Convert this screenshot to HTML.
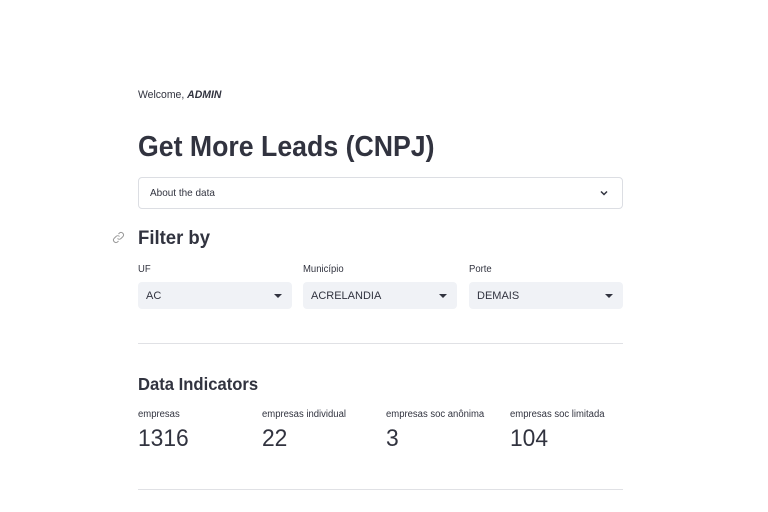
<html><head><style>
body{margin:0;background:#fff;font-family:"Liberation Sans",sans-serif;color:#31333f;width:768px;height:512px;overflow:hidden;position:relative}
.a{position:absolute;white-space:nowrap}
.n{transform:scaleX(0.95);transform-origin:left}
.sel{position:absolute;top:282px;height:27px;background:#f0f2f6;border-radius:4px;font-size:11px;line-height:28px;padding-left:8px;box-sizing:border-box}
.sel:after{content:"";position:absolute;right:10px;top:12px;border-left:4px solid transparent;border-right:4px solid transparent;border-top:4px solid #31333f}
.lab{position:absolute;top:264px;font-size:10px}
.ml{position:absolute;top:409px;font-size:10px}
.mv{position:absolute;top:425px;font-size:24px;line-height:28px}
</style></head><body>
<div class="a n" style="left:138px;top:89px;font-size:11px">Welcome, <b><i>ADMIN</i></b></div>
<div class="a" style="left:138px;top:129px;font-size:29px;font-weight:bold;line-height:36px;transform:scaleX(0.92);transform-origin:left">Get More Leads (CNPJ)</div>
<div class="a" style="left:138px;top:177px;width:485px;height:32px;border:1px solid #dcdee3;border-radius:4px;box-sizing:border-box"><span class="n" style="position:absolute;left:11px;top:9px;font-size:10.5px">About the data</span>
<svg style="position:absolute;right:13px;top:10px" width="10" height="10" viewBox="0 0 10 10"><path d="M2 3.5L5 6.5L8 3.5" stroke="#31333f" stroke-width="1.5" fill="none"/></svg></div>
<svg class="a" style="left:112px;top:231px" width="13" height="13" viewBox="0 0 13 13" fill="none" stroke="#999" stroke-width="1"><path d="M5.5 7.5a2.5 2.5 0 0 0 3.5 0l2-2a2.5 2.5 0 0 0-3.5-3.5l-1 1"/><path d="M7.5 5.5a2.5 2.5 0 0 0-3.5 0l-2 2a2.5 2.5 0 0 0 3.5 3.5l1-1"/></svg>
<div class="a n" style="left:138px;top:226px;font-size:19.5px;font-weight:bold;line-height:24px">Filter by</div>
<div class="lab n" style="left:138px">UF</div>
<div class="lab n" style="left:303px">Município</div>
<div class="lab n" style="left:469px">Porte</div>
<div class="sel" style="left:138px;width:154px">AC</div>
<div class="sel" style="left:303px;width:154px">ACRELANDIA</div>
<div class="sel" style="left:469px;width:154px">DEMAIS</div>
<div class="a" style="left:138px;top:343px;width:485px;height:1px;background:#e0e1e5"></div>
<div class="a n" style="left:138px;top:373px;font-size:17.5px;font-weight:bold;line-height:22px">Data Indicators</div>
<div class="ml n" style="left:138px">empresas</div>
<div class="ml n" style="left:262px">empresas individual</div>
<div class="ml n" style="left:386px">empresas soc anônima</div>
<div class="ml n" style="left:510px">empresas soc limitada</div>
<div class="mv n" style="left:138px">1316</div>
<div class="mv n" style="left:262px">22</div>
<div class="mv n" style="left:386px">3</div>
<div class="mv n" style="left:510px">104</div>
<div class="a" style="left:138px;top:489px;width:485px;height:1px;background:#e0e1e5"></div>
</body></html>
